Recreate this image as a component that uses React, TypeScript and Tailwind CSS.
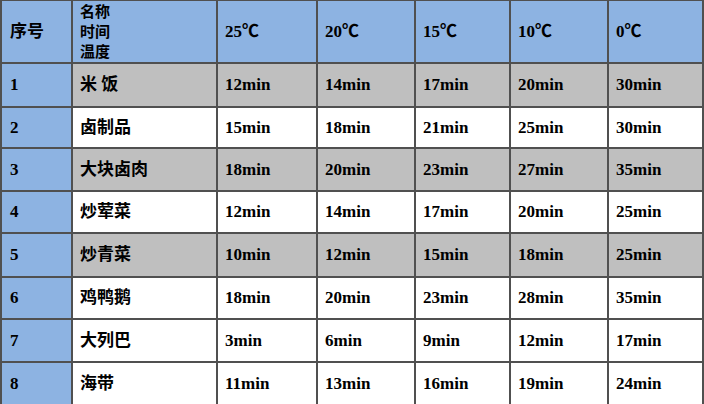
const temps = ["25℃", "20℃", "15℃", "10℃", "0℃"]

interface IFoodRow {
  no: string
  name: string
  times: string[]
  height: string
  gray: boolean
}

const rows: IFoodRow[] = [
  { no: "1", name: "米 饭", times: ["12min", "14min", "17min", "20min", "30min"], height: "h-[44px]", gray: true },
  { no: "2", name: "卤制品", times: ["15min", "18min", "21min", "25min", "30min"], height: "h-[41px]", gray: false },
  { no: "3", name: "大块卤肉", times: ["18min", "20min", "23min", "27min", "35min"], height: "h-[43px]", gray: true },
  { no: "4", name: "炒荤菜", times: ["12min", "14min", "17min", "20min", "25min"], height: "h-[42px]", gray: false },
  { no: "5", name: "炒青菜", times: ["10min", "12min", "15min", "18min", "25min"], height: "h-[44px]", gray: true },
  { no: "6", name: "鸡鸭鹅", times: ["18min", "20min", "23min", "28min", "35min"], height: "h-[42px]", gray: false },
  { no: "7", name: "大列巴", times: ["3min", "6min", "9min", "12min", "17min"], height: "h-[43px]", gray: false },
  { no: "8", name: "海带", times: ["11min", "13min", "16min", "19min", "24min"], height: "h-[43px]", gray: false },
]

// widths include the right border line
const colWidths = ["w-[145px]", "w-[100px]", "w-[98px]", "w-[95px]", "w-[98px]", "w-[95px]"]

const cell = "flex items-center pl-[7px] border-r-2 border-b-2 border-[#505050] shrink-0"

export default function App() {
  return (
    <div
      className="w-[704px] h-[404px] overflow-hidden bg-white text-black font-bold text-[17px]"
      style={{ fontFamily: '"Liberation Serif", "Noto Sans CJK SC", serif' }}
    >
      <div className="border-l-2 border-t border-[#505050]">
        {/* Header */}
        <div className="flex h-[63px] bg-[#8db3e2]">
          <div className={`${cell} w-[71px] pl-[8px]`}>序号</div>
          <div className={`${cell} ${colWidths[0]} text-[15px] leading-[20px]`}>
            <div>
              <div>名称</div>
              <div>时间</div>
              <div>温度</div>
            </div>
          </div>
          {temps.map((t, i) => (
            <div key={t} className={`${cell} ${colWidths[i + 1]}`}>
              {t}
            </div>
          ))}
        </div>

        {/* Body */}
        {rows.map((row) => (
          <div key={row.no} className={`flex ${row.height}`}>
            <div className={`${cell} w-[71px] pl-[8px] bg-[#8db3e2]`}>{row.no}</div>
            <div className={`flex flex-1 ${row.gray ? "bg-[#bfbfbf]" : "bg-white"}`}>
              <div className={`${cell} ${colWidths[0]}`}>{row.name}</div>
              {row.times.map((t, i) => (
                <div key={i} className={`${cell} ${colWidths[i + 1]}`}>
                  {t}
                </div>
              ))}
            </div>
          </div>
        ))}
      </div>
    </div>
  )
}
